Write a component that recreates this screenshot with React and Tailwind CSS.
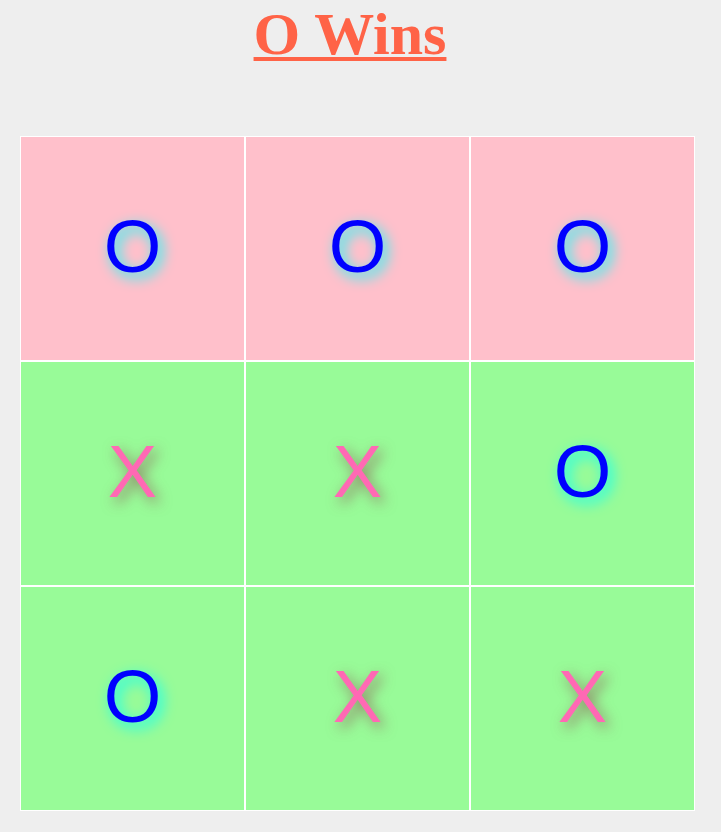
import React from 'react';

const board = ['O', 'O', 'O', 'X', 'X', 'O', 'O', 'X', 'X'];
const winLine = [0, 1, 2];

function Square({ value, index }) {
  const isWin = winLine.includes(index);
  return (
    <div
      className={`w-[225px] h-[225px] border border-white flex items-center justify-center pb-[3px] ${
        isWin ? 'bg-[#ffc0cb]' : 'bg-[#98fb98]'
      }`}
    >
      {value === 'O' ? (
        <span className="text-[74px] leading-none text-[#0000ff] [text-shadow:4px_5px_14px_#00ffff] font-['Liberation_Sans',Arial,sans-serif]">
          O
        </span>
      ) : (
        <span className="text-[74px] leading-none text-[#ff69b4] [text-shadow:4px_5px_14px_rgba(140,50,70,0.65)] font-['Liberation_Sans',Arial,sans-serif]">
          X
        </span>
      )}
    </div>
  );
}

export default function App() {
  return (
    <div className="min-h-screen bg-[#eeeeee] w-full">
      <div className="w-[700px]">
        <h1 className="text-center text-[60px] leading-[69px] font-bold underline decoration-[4px] underline-offset-[3px] text-[#ff6347] font-['Liberation_Serif','Times_New_Roman',serif]">
          O Wins
        </h1>
      </div>
      <div className="ml-[20px] mt-[67px] grid grid-cols-[repeat(3,225px)] w-[675px]">
        {board.map((v, i) => (
          <Square key={i} value={v} index={i} />
        ))}
      </div>
    </div>
  );
}
